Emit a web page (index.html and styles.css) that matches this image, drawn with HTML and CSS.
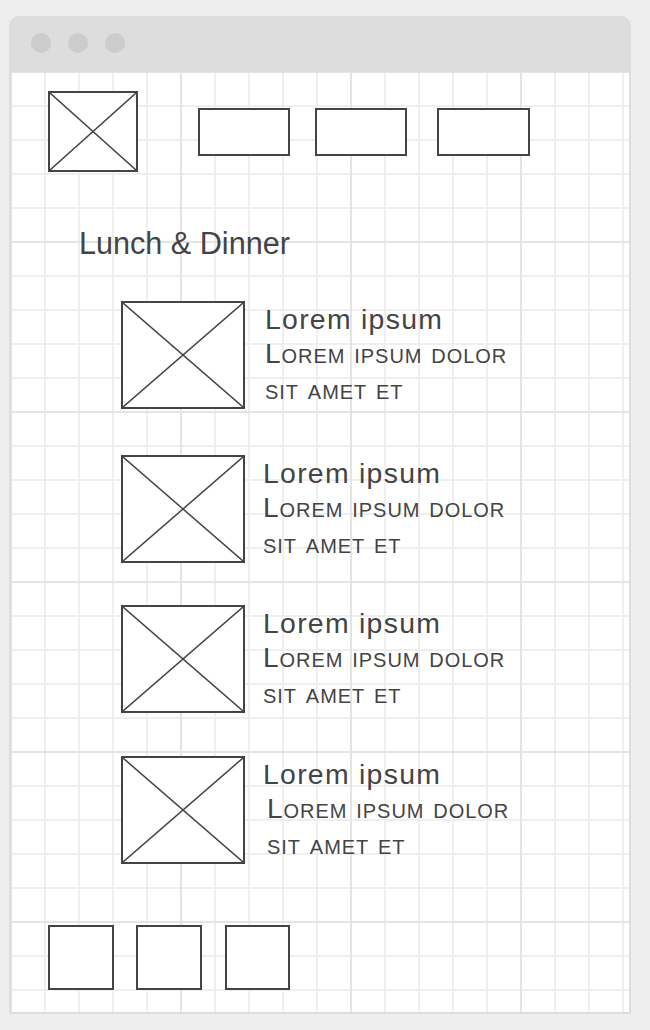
FILE: index.html
```html
<!DOCTYPE html>
<html lang="en">
<head>
<meta charset="utf-8">
<title>Lunch &amp; Dinner</title>
<link rel="stylesheet" href="styles.css">
</head>
<body>
<div class="window">
  <div class="titlebar">
    <span class="dot"></span>
    <span class="dot"></span>
    <span class="dot"></span>
  </div>
  <div class="canvas">
    <header class="header">
      <div class="ph logo">
        <svg class="cross" viewBox="0 0 100 100" preserveAspectRatio="none"><line x1="0" y1="0" x2="100" y2="100"/><line x1="100" y1="0" x2="0" y2="100"/></svg>
      </div>
      <nav class="nav">
        <div class="ph nav-btn"></div>
        <div class="ph nav-btn"></div>
        <div class="ph nav-btn nav-btn--last"></div>
      </nav>
    </header>

    <h1 class="heading">Lunch &amp; Dinner</h1>

    <ul class="menu">
      <li class="item item--first">
        <div class="ph thumb">
          <svg class="cross" viewBox="0 0 100 100" preserveAspectRatio="none"><line x1="0" y1="0" x2="100" y2="100"/><line x1="100" y1="0" x2="0" y2="100"/></svg>
        </div>
        <div class="info info--wide">
          <h2 class="title">Lorem ipsum</h2>
          <p class="desc">Lorem ipsum dolor sit amet et</p>
        </div>
      </li>
      <li class="item">
        <div class="ph thumb">
          <svg class="cross" viewBox="0 0 100 100" preserveAspectRatio="none"><line x1="0" y1="0" x2="100" y2="100"/><line x1="100" y1="0" x2="0" y2="100"/></svg>
        </div>
        <div class="info">
          <h2 class="title">Lorem ipsum</h2>
          <p class="desc">Lorem ipsum dolor sit amet et</p>
        </div>
      </li>
      <li class="item">
        <div class="ph thumb">
          <svg class="cross" viewBox="0 0 100 100" preserveAspectRatio="none"><line x1="0" y1="0" x2="100" y2="100"/><line x1="100" y1="0" x2="0" y2="100"/></svg>
        </div>
        <div class="info">
          <h2 class="title">Lorem ipsum</h2>
          <p class="desc">Lorem ipsum dolor sit amet et</p>
        </div>
      </li>
      <li class="item item--last">
        <div class="ph thumb">
          <svg class="cross" viewBox="0 0 100 100" preserveAspectRatio="none"><line x1="0" y1="0" x2="100" y2="100"/><line x1="100" y1="0" x2="0" y2="100"/></svg>
        </div>
        <div class="info">
          <h2 class="title">Lorem ipsum</h2>
          <p class="desc desc--shift">Lorem ipsum dolor sit amet et</p>
        </div>
      </li>
    </ul>

    <footer class="footer">
      <div class="ph social"></div>
      <div class="ph social"></div>
      <div class="ph social social--last"></div>
    </footer>
  </div>
</div>
</body>
</html>
```

FILE: styles.css
```css
* {
  box-sizing: border-box;
}

html, body {
  margin: 0;
  padding: 0;
}

body {
  background: #eeeeee;
  font-family: "Liberation Sans", Arial, sans-serif;
  color: #444444;
}

.window {
  margin: 16px 0 0 9px;
  width: 622px;
  border-radius: 10px 10px 0 0;
  overflow: hidden;
}

.titlebar {
  height: 56px;
  background: #dddddd;
  display: flex;
  gap: 17px;
  padding: 17px 0 0 22px;
}

.dot {
  width: 20px;
  height: 20px;
  border-radius: 50%;
  background: #cccccc;
}

.canvas {
  height: 942px;
  border: 2px solid #dddddd;
  border-top: none;
  background-color: #ffffff;
  background-image:
    linear-gradient(to right, #e4e4e4 2px, transparent 2px),
    linear-gradient(to bottom, #e4e4e4 2px, transparent 2px),
    linear-gradient(to right, #efefef 2px, transparent 2px),
    linear-gradient(to bottom, #efefef 2px, transparent 2px);
  background-size: 170px 170px, 170px 170px, 34px 34px, 34px 34px;
  background-position: 169px 169px, 169px 169px, 33px 33px, 33px 33px;
}

.ph {
  border: 2px solid #444444;
  background: #ffffff;
  flex: none;
}

.cross {
  display: block;
  width: 100%;
  height: 100%;
}

.cross line {
  stroke: #444444;
  stroke-width: 1.5;
  vector-effect: non-scaling-stroke;
}

.header {
  display: flex;
  align-items: flex-start;
  padding: 19px 0 0 37px;
}

.logo {
  width: 90px;
  height: 81px;
}

.nav {
  display: flex;
  gap: 25px;
  margin: 17px 0 0 60px;
}

.nav-btn {
  width: 92px;
  height: 48px;
}

.nav-btn--last {
  margin-left: 5px;
  width: 93px;
}

.heading {
  margin: 56px 0 0;
  padding-left: 68px;
  font-size: 30.6px;
  line-height: 30px;
  font-weight: normal;
}

.menu {
  list-style: none;
  margin: 43px 0 0;
  padding: 0 0 0 110px;
  display: flex;
  flex-direction: column;
  gap: 42px;
}

.item {
  display: flex;
  align-items: flex-start;
}

.item--first {
  margin-bottom: 4px;
}

.item--last {
  margin-top: 1px;
}

.thumb {
  width: 124px;
  height: 108px;
}

.info {
  margin-left: 18px;
  padding-top: 1px;
}

.info--wide {
  margin-left: 20px;
}

.title {
  margin: 0;
  font-size: 28.4px;
  line-height: 35px;
  font-weight: normal;
  letter-spacing: 0.045em;
}

.desc {
  margin: -1px 0 0;
  width: 260px;
  font-size: 28px;
  line-height: 36px;
  font-variant: small-caps;
  letter-spacing: 0.035em;
}

.desc--shift {
  padding-left: 4px;
}

.footer {
  display: flex;
  gap: 22px;
  margin-top: 61px;
  padding-left: 37px;
}

.social {
  width: 66px;
  height: 65px;
}

.social--last {
  margin-left: 1px;
  width: 65px;
}
```
